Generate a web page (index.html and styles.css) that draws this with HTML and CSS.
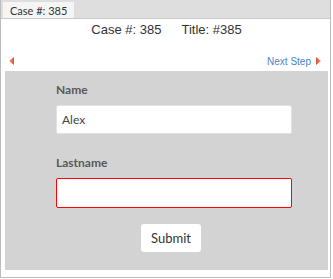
FILE: index.html
```html
<!DOCTYPE html>
<html lang="en">
<head>
    <meta name="viewport" content="width=device-width, initial-scale=1.0">
    <title>Case #: 385</title>
    <link rel="stylesheet" href="styles.css">
</head>
<body>
    <div class="frame">
        <div class="tabs">
            <div class="tab">Case #: 385</div>
        </div>
        <div class="case-title">
            <span>Case #: 385</span>
            <span>Title: #385</span>
        </div>
        <div class="nav">
            <svg class="arrow" width="6" height="8" viewBox="0 0 6 8">
                <defs>
                    <linearGradient id="ga" x1="0" y1="0" x2="1" y2="0">
                        <stop offset="0" stop-color="#f39a7c"/>
                        <stop offset="1" stop-color="#e0502c"/>
                    </linearGradient>
                </defs>
                <polygon points="5,0 5,8 0,4" fill="url(#ga)"/>
            </svg>
            <a class="next" href="#">Next Step
                <svg class="arrow" width="6" height="8" viewBox="0 0 6 8">
                    <defs>
                        <linearGradient id="gb" x1="0" y1="0" x2="1" y2="0">
                            <stop offset="0" stop-color="#e0502c"/>
                            <stop offset="1" stop-color="#f39a7c"/>
                        </linearGradient>
                    </defs>
                    <polygon points="0,0 0,8 5,4" fill="url(#gb)"/>
                </svg>
            </a>
        </div>
        <div class="panel">
            <form class="case-form">
                <label for="name">Name</label>
                <input type="text" id="name" value="Alex">
                <label for="lastname">Lastname</label>
                <input type="text" id="lastname" class="invalid">
                <button type="submit">Submit</button>
            </form>
        </div>
    </div>
</body>
</html>
```

FILE: styles.css
```css
body {
    margin: 0;
    font-family: Lato, "Open Sans", sans-serif;
    background: white;
}
.frame {
    box-sizing: border-box;
    width: 331px;
    height: 278px;
    border: 1px solid #bcbcbc;
    border-top: none;
}
.tabs {
    height: 19px;
    background: #dedede;
    border-bottom: 1px solid #c9c9c9;
    padding: 2px 0 0 2px;
    box-sizing: border-box;
    display: flex;
}
.tab {
    background: #f5f5f5;
    color: #333;
    font-size: 11px;
    line-height: 17px;
    padding: 0 7px;
}
.case-title {
    font-family: "Liberation Sans", Arial, sans-serif;
    font-size: 13px;
    line-height: 16px;
    color: #333;
    padding: 3px 0 0 2px;
    display: flex;
    justify-content: center;
    gap: 20px;
}
.nav {
    display: flex;
    justify-content: space-between;
    align-items: center;
    padding: 15px 8px 0 8px;
    height: 16px;
}
.next {
    font-family: "Liberation Sans", Arial, sans-serif;
    font-size: 10px;
    color: #4a84cc;
    text-decoration: none;
    display: flex;
    align-items: center;
    gap: 5px;
}
.arrow {
    display: block;
}
.panel {
    margin: 2px 0 0 4px;
    width: 323px;
    height: 199px;
    background: #d3d3d3;
}
.case-form {
    display: flex;
    flex-direction: column;
    align-items: flex-start;
    padding: 11px 0 0 51px;
}
.case-form label {
    font-size: 12px;
    font-weight: bold;
    color: #595959;
    line-height: 16px;
    margin-bottom: 7px;
}
.case-form input {
    box-sizing: border-box;
    width: 236px;
    height: 29px;
    border: 1px solid #e2e2e2;
    border-radius: 2px;
    background: white;
    font-family: Lato, sans-serif;
    font-size: 12px;
    color: #444;
    padding: 0 5px;
    margin-bottom: 21px;
}
.case-form input.invalid {
    border-color: #ff0000;
    height: 30px;
    margin-bottom: 16px;
}
.case-form button {
    align-self: flex-start;
    margin-left: 85px;
    width: 60px;
    height: 28px;
    border: none;
    border-radius: 3px;
    background: white;
    font-family: Lato, sans-serif;
    font-size: 13px;
    color: #333;
}
```
